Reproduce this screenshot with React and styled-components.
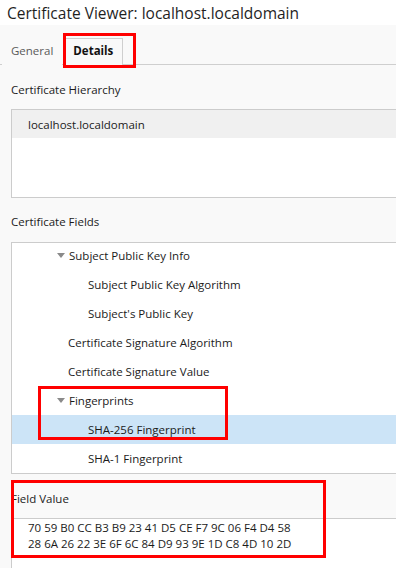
import React from 'react';
import styled, { createGlobalStyle } from 'styled-components';

const GlobalStyle = createGlobalStyle`
  html, body {
    margin: 0;
    padding: 0;
    background: #f9f9f9;
    overflow: hidden;
  }
  body {
    font-family: "Open Sans", "Noto Sans", sans-serif;
    color: #1b1b1b;
  }
`;

const Window = styled.div`
  position: relative;
  width: 396px;
  height: 568px;
  overflow: hidden;
  background: #f9f9f9;
`;

const TitleBar = styled.div`
  height: 25px;
  background: #ffffff;
  padding-left: 7px;
  font-size: 15.5px;
  line-height: 26px;
  color: #1f1f1f;
  white-space: nowrap;
`;

const TabStrip = styled.div`
  display: flex;
  align-items: flex-end;
  height: 40px;
  border-bottom: 1px solid #cfcfcf;
  padding-left: 2px;
  box-sizing: border-box;
`;

const Tab = styled.div`
  box-sizing: border-box;
  padding: 0 ${p => (p.active ? '9px' : '8px')};
  margin-right: ${p => (p.active ? '0' : '1px')};
  font-size: 11.5px;
  line-height: 24px;
  font-weight: ${p => (p.active ? 700 : 400)};
  color: ${p => (p.active ? '#111' : '#5a5a5a')};
  border: 1px solid ${p => (p.active ? '#cfcfcf' : 'transparent')};
  border-bottom: none;
  background: #f9f9f9;
  margin-bottom: -1px;
  height: 27px;
`;

const Body = styled.div`
  padding-left: 11px;
`;

const SectionLabel = styled.div`
  font-size: 11.5px;
  height: 20px;
  line-height: 20px;
  padding-top: ${p => p.top}px;
  padding-bottom: ${p => p.bottom}px;
  white-space: nowrap;
`;

const Box = styled.div`
  width: 400px;
  height: ${p => p.h}px;
  border: 1px solid #cccccc;
  background: #ffffff;
  box-sizing: border-box;
  overflow: hidden;
`;

const TreeList = styled.div`
  margin-top: ${p => p.offset || 0}px;
`;

const Row = styled.div`
  display: flex;
  align-items: center;
  height: ${p => p.h || 29}px;
  padding-left: ${p => p.indent}px;
  background: ${p => (p.selected ? '#cce4f7' : p.shaded ? '#f0f0f0' : 'transparent')};
  font-size: 11.5px;
  white-space: nowrap;
`;

const Twisty = styled.span`
  display: inline-block;
  width: 0;
  height: 0;
  border-left: 4px solid transparent;
  border-right: 4px solid transparent;
  border-top: 5px solid #8a8a8a;
  margin-right: 4px;
  margin-left: -11px;
`;

const ValueHeader = styled.div`
  height: 44px;
  font-size: 11.5px;
  line-height: 18px;
  padding-top: 16px;
  box-sizing: border-box;
  white-space: nowrap;
`;

const ValueBox = styled.div`
  width: 400px;
  height: 60px;
  border-top: 1px solid #cccccc;
  border-left: 1px solid #cccccc;
  background: #ffffff;
  box-sizing: border-box;
  padding: 1px 0 0 16px;
  font-size: 11.5px;
  line-height: 16px;
  white-space: nowrap;
`;

const Highlight = styled.div`
  position: absolute;
  left: ${p => p.x}px;
  top: ${p => p.y}px;
  width: ${p => p.w}px;
  height: ${p => p.h}px;
  border: 3px solid #ff0000;
  box-sizing: border-box;
  pointer-events: none;
`;

const fields = [
  { label: 'Subject Public Key Info', indent: 68, open: true },
  { label: 'Subject Public Key Algorithm', indent: 88 },
  { label: "Subject's Public Key", indent: 88 },
  { label: 'Certificate Signature Algorithm', indent: 68 },
  { label: 'Certificate Signature Value', indent: 68 },
  { label: 'Fingerprints', indent: 68, open: true },
  { label: 'SHA-256 Fingerprint', indent: 88, selected: true },
  { label: 'SHA-1 Fingerprint', indent: 88 },
];

export default function App() {
  return (
    <Window>
      <GlobalStyle />
      <TitleBar>Certificate Viewer: localhost.localdomain</TitleBar>
      <TabStrip>
        <Tab>General</Tab>
        <Tab active>Details</Tab>
      </TabStrip>
      <Body>
        <SectionLabel top={15} bottom={9}>Certificate Hierarchy</SectionLabel>
        <Box h={89}>
          <Row indent={16} h={28} shaded>localhost.localdomain</Row>
        </Box>
        <SectionLabel top={14} bottom={10}>Certificate Fields</SectionLabel>
        <Box h={232}>
          <TreeList offset={-2}>
            {fields.map(f => (
              <Row key={f.label} indent={f.indent - 12} selected={f.selected}>
                {f.open && <Twisty />}
                {f.label}
              </Row>
            ))}
          </TreeList>
        </Box>
        <ValueHeader>Field Value</ValueHeader>
        <ValueBox>
          70 59 B0 CC B3 B9 23 41 D5 CE F7 9C 06 F4 D4 58
          <br />
          28 6A 26 22 3E 6F 6C 84 D9 93 9E 1D C8 4D 10 2D
        </ValueBox>
      </Body>
      <Highlight x={63} y={33} w={73} h={35} />
      <Highlight x={38} y={386} w={190} h={54} />
      <Highlight x={11} y={480} w={315} h={78} />
    </Window>
  );
}
